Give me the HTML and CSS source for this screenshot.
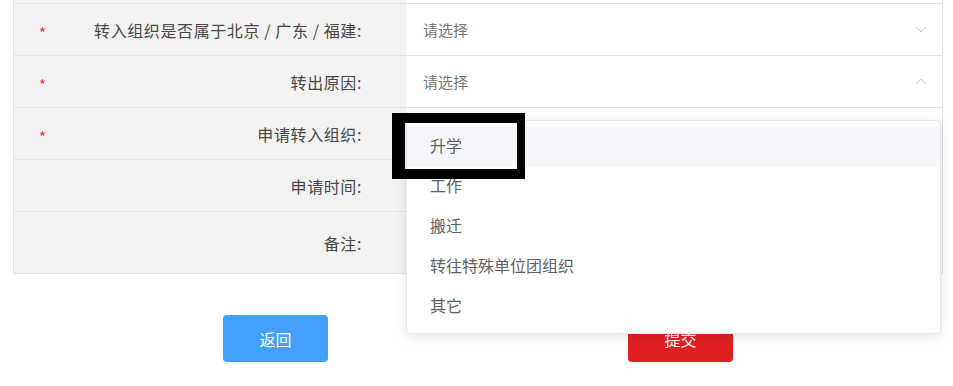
FILE: index.html
```html
<!DOCTYPE html>
<html lang="zh">
<head>
    <meta charset="UTF-8">
    <meta name="viewport" content="width=device-width, initial-scale=1.0">
    <title>转出申请</title>
    <link rel="stylesheet" href="styles.css">
</head>
<body>
    <div class="page">
        <div class="form">
            <div class="row row-cut">
                <div class="label"></div>
                <div class="value"></div>
            </div>
            <div class="row">
                <div class="label"><span class="req">*</span><span>转入组织是否属于北京 / 广东 / 福建:</span></div>
                <div class="value">
                    <span class="placeholder">请选择</span>
                    <svg class="arrow" width="12" height="7" viewBox="0 0 12 7"><path d="M1 1l5 5 5-5" fill="none" stroke="#c0c4cc" stroke-width="1"/></svg>
                </div>
            </div>
            <div class="row">
                <div class="label"><span class="req">*</span><span>转出原因:</span></div>
                <div class="value">
                    <span class="placeholder">请选择</span>
                    <svg class="arrow" width="12" height="7" viewBox="0 0 12 7"><path d="M1 6l5-5 5 5" fill="none" stroke="#c0c4cc" stroke-width="1"/></svg>
                </div>
            </div>
            <div class="row">
                <div class="label"><span class="req">*</span><span>申请转入组织:</span></div>
                <div class="value"></div>
            </div>
            <div class="row">
                <div class="label"><span>申请时间:</span></div>
                <div class="value"></div>
            </div>
            <div class="row row-tall">
                <div class="label"><span>备注:</span></div>
                <div class="value"></div>
            </div>
        </div>

        <div class="actions">
            <button class="btn btn-back">返回</button>
            <button class="btn btn-submit">提交</button>
        </div>

        <!-- 下拉选项 -->
        <ul class="dropdown">
            <li class="hover">升学</li>
            <li>工作</li>
            <li>搬迁</li>
            <li>转往特殊单位团组织</li>
            <li>其它</li>
        </ul>

        <div class="mark"></div>
    </div>
</body>
</html>
```

FILE: styles.css
```css
body {
    margin: 0;
    background: #fff;
    font-family: "Noto Sans CJK SC", "Noto Sans", sans-serif;
}

.page {
    position: relative;
    width: 953px;
    height: 386px;
    overflow: hidden;
}

.form {
    margin: 0 10px 0 13px;
    border: 1px solid #e2e2e2;
    border-top: none;
}

.row {
    display: grid;
    grid-template-columns: 392px 1fr;
    height: 52px;
    border-top: 1px solid #e4e4e4;
    box-sizing: border-box;
}

.row-cut {
    height: 3px;
    border-top: none;
}

.row-tall {
    height: 62px;
}

.label {
    background: #f2f2f2;
    display: flex;
    align-items: center;
    justify-content: flex-end;
    padding-right: 44px;
    font-size: 16px;
    letter-spacing: 0.6px;
    color: #484848;
}

.req {
    margin-left: 25px;
    margin-right: auto;
    color: #f03a3a;
    font-size: 15px;
    padding-top: 5px;
}

.value {
    background: #fff;
    display: flex;
    align-items: center;
    justify-content: space-between;
    padding: 0 15px 0 17px;
}

.placeholder {
    font-size: 15px;
    color: #777;
    padding-bottom: 1px;
}

.actions {
    display: flex;
    justify-content: center;
    gap: 300px;
    margin: 41px 10px 0 13px;
}

.btn {
    width: 105px;
    height: 47px;
    border: none;
    border-radius: 4px;
    color: #fff;
    font-family: inherit;
    font-size: 16px;
    cursor: pointer;
}

.btn-back {
    background: #42a0ff;
}

.btn-submit {
    background: #e02020;
}

.dropdown {
    position: absolute;
    left: 406px;
    top: 120px;
    width: 535px;
    margin: 0;
    padding: 6px 0;
    list-style: none;
    background: #fff;
    border: 1px solid #e4e7ed;
    border-radius: 4px;
    box-shadow: 0 2px 12px rgba(0, 0, 0, 0.1);
    box-sizing: border-box;
}

.dropdown li {
    height: 40px;
    line-height: 37px;
    padding-left: 23px;
    font-size: 16px;
    color: #606266;
}

.dropdown li.hover {
    background: #f5f7fa;
}

.mark {
    position: absolute;
    left: 392px;
    top: 113px;
    width: 133px;
    height: 66px;
    border-style: solid;
    border-color: #000;
    border-width: 10px 8px 10px 13px;
    box-sizing: border-box;
}
```
